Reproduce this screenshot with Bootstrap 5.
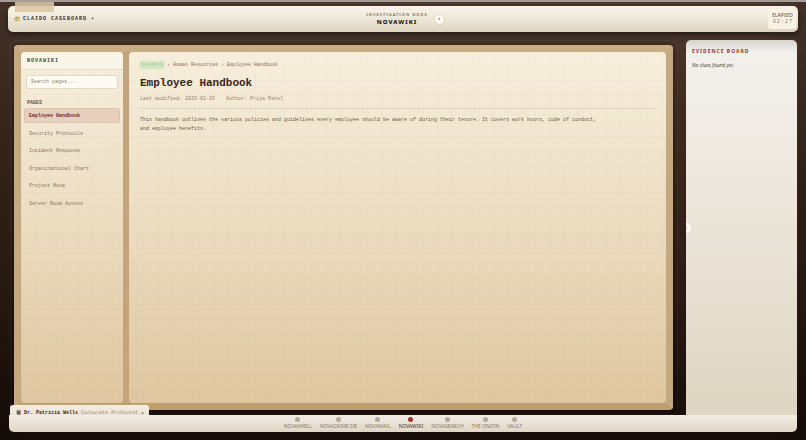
<!DOCTYPE html>
<html lang="en">
<head>
<meta charset="utf-8">
<meta name="viewport" content="width=device-width, initial-scale=1">
<title>Claido Caseboard – NovaWiki</title>
<link href="https://cdn.jsdelivr.net/npm/bootstrap@5.3.0/dist/css/bootstrap.min.css" rel="stylesheet">
<style>
:root{--mono:"Liberation Mono","Courier New",monospace;--sans:"Noto Sans","Open Sans",sans-serif}
body{font:5px/8px var(--mono);color:#3b2820;background:linear-gradient(90deg,#0002,#0000 4%,#0000 96%,#0002),linear-gradient(#4f3a30,#3e2b20 25%,#2b1c13 65%,#150c08);border-top:2px solid #a49c95;min-height:100vh;padding:4px 8px 8px}
button,input,a{font:inherit;color:inherit;text-decoration:none}
button{border:0;background:none;padding:0}
.topbar{height:26px;border-radius:5px;background:linear-gradient(#f7f1e8,#f2ecdf 35%,#ddd3be);box-shadow:0 3px 7px #0008;padding:0 2px 0 6px}
.topbar>*{flex:1 1 0}
.tape{left:7px;top:-4px;width:39px;height:10px;background:#dbc7a4dd}
.brand{font-weight:700;letter-spacing:1px;gap:3px}
.brand svg{width:6px;height:6px}
.kicker{font:600 4px/6px var(--sans);letter-spacing:1px;color:#806a5c}
.node-name{font:800 6px/9px var(--sans);letter-spacing:1px;color:#241710;margin:0}
.help{width:9px;height:9px;border-radius:50%;background:#fffaf0;font-size:4px;font-weight:700;box-shadow:0 0 2px #a988}
.title-block{gap:7px}
.clock{background:#f8f2e4;border-radius:3px;padding:3px 3px 3px 4px;line-height:8px;color:#8d7b5d;letter-spacing:1px;text-align:right}
.clock div{font:500 5px/6px var(--sans);letter-spacing:normal;color:#776153}
.frame{margin-top:8px;margin-left:2px;border:1px solid #ffffff0b;border-radius:7px;padding:4px 4px 4px 3px}
.board{border:7px solid;border-color:#c9ae84 #c4a87e #bd9f72;border-radius:4px;background:#c4a47a;gap:6px;box-shadow:0 0 5px #0007}
.paper{border-radius:4px;background:repeating-linear-gradient(90deg,#a0783c09 0 1px,transparent 1px 14px),repeating-linear-gradient(#a0783c09 0 1px,transparent 1px 14px),linear-gradient(#f7eedd,#eee0c6 40%,#dfc7a0)}
.wiki-side{width:102px}
.side-title{font:700 5px/8px var(--mono);letter-spacing:1px;color:#304c27;background:#faf5e7;padding:5px 6px 4px;margin:0;border-bottom:1px solid #e6dac4;border-radius:4px 4px 0 0}
.search{margin:5px 5px 0;width:calc(100% - 10px);height:14px;border:1px solid #e4d9c5;border-radius:2px;background:#fffbf3;padding:0 4px;color:#665246}
.search::placeholder{color:#8d7c6b;opacity:1}
.side-label{font:700 5px/6px var(--mono);color:#67503f;margin:11px 6px 2px}
.page-list{display:grid;grid-template-rows:repeat(6,1fr);height:105px;margin:0 3px}
.page-list a{height:15px;padding:3px 4px;line-height:8px;border:1px solid transparent;border-radius:3px;color:#8b735d}
.page-list a.active{background:#e7d1be;border-color:#dec1ae;color:#75272b;font-weight:700}
.article{padding:9px 11px}
.crumbs{color:#89715c;gap:3px}
.crumbs a:first-child{color:#a4cda0;background:#d7e8c5;box-shadow:0 0 2px #d7e8c5}
.article h1{font:700 11px/16px var(--mono);color:#3a2417;margin:6px 0 4px}
.meta{color:#99836c;gap:11px;padding-bottom:5px;border-bottom:1px solid #e1d4bd}
.copy{line-height:9px;color:#705b49;margin:7px 0;max-width:153ch}
.evidence{width:111px;margin:8px 1px 0 0;padding:7px 6px;border-radius:5px 5px 0 0;background:linear-gradient(#d5d2cf,#f3f0ec 12px,#eee8df 35%,#ded6c2);font-family:var(--sans)}
.evidence h2{font:700 5px/9px var(--sans);letter-spacing:1px;color:#93343b;margin:0 0 5px}
.evidence em{color:#54463e}
.toggle{left:-5px;top:50%;margin-top:-5px;width:10px;height:10px;border-radius:50%;background:#fffcf3;line-height:8px;clip-path:inset(0 0 0 5px)}
.witness{left:1px;bottom:17px;height:10px;border-radius:3px 3px 0 0;background:linear-gradient(#f4eee1,#ece3d3);padding:4px 5px 0 6px;gap:3px;line-height:8px;overflow:hidden}
.witness svg{width:5px;height:5px;margin-top:1px}
.role{color:#9d8c7d}
.caret-up{color:#873538}
.dock-wrap{margin:0 1px}
.dock{height:17px;border-radius:0 0 5px 5px;background:linear-gradient(#f3ede7,#dfd6c5);padding-top:2px;gap:8px}
.dock a{font:400 5px/8px var(--sans);color:#887769;text-align:center}
.dock a::before{content:"";display:block;width:5px;height:5px;border-radius:50%;background:#b5a89b;margin:0 auto}
.dock a.active{color:#463228}
.dock a.active::before{background:#9f3436}
</style>
<script src="https://cdn.jsdelivr.net/npm/bootstrap@5.3.0/dist/js/bootstrap.bundle.min.js"></script>
</head>
<body class="d-flex flex-column">
<header class="topbar d-flex align-items-center position-relative">
  <span class="tape position-absolute"></span>
  <button class="brand d-flex align-items-center text-start"><svg viewBox="0 0 12 12"><path fill="#bda25c" d="M1 4l3-3 7 1v8H1z"/><path fill="#e4cb77" d="M3 5l8-2-2 8H1z"/><path stroke="#58724c" d="M5 5l3-3M4 8h4"/></svg>CLAIDO CASEBOARD ▾</button>
  <div class="title-block d-flex align-items-center justify-content-center">
    <div class="text-center"><div class="kicker">INVESTIGATION NODE</div><p class="node-name">NOVAWIKI</p></div>
    <button class="help" aria-label="Help">?</button>
  </div>
  <div class="d-flex justify-content-end"><div class="clock"><div>ELAPSED</div>02:27</div></div>
</header>
<div class="d-flex flex-grow-1 gap-2">
  <main class="frame d-flex flex-grow-1">
    <div class="board d-flex flex-grow-1">
      <nav class="paper wiki-side flex-shrink-0" aria-label="Pages">
        <h2 class="side-title">NOVAWIKI</h2>
        <input class="search" type="search" placeholder="Search pages..." aria-label="Search pages">
        <div class="side-label">PAGES</div>
        <div class="page-list">
          <a class="active" href="#">Employee Handbook</a>
          <a href="#">Security Protocols</a>
          <a href="#">Incident Response</a>
          <a href="#">Organizational Chart</a>
          <a href="#">Project Nova</a>
          <a href="#">Server Room Access</a>
        </div>
      </nav>
      <article class="paper article flex-grow-1">
        <div class="crumbs d-flex"><a href="#">NovaWiki</a><span>› Human Resources</span><span>› Employee Handbook</span></div>
        <h1>Employee Handbook</h1>
        <div class="meta d-flex"><span>Last modified: 2025-02-25</span><span>Author: Priya Patel</span></div>
        <p class="copy">This handbook outlines the various policies and guidelines every employee should be aware of during their tenure. It covers work hours, code of conduct, and employee benefits.</p>
      </article>
    </div>
  </main>
  <aside class="evidence position-relative flex-shrink-0">
    <h2>EVIDENCE BOARD</h2>
    <em>No clues found yet.</em>
    <button class="toggle position-absolute" aria-label="Collapse evidence board">›</button>
  </aside>
</div>
<footer class="dock-wrap position-relative">
  <button class="witness position-absolute d-flex"><svg viewBox="0 0 10 10"><path fill="#3b4534" d="M1 1h8v8H2z"/><path fill="#a4584c" d="M5 4h3v4H5z"/><path stroke="#a9c495" d="M2 3h5M3 5h2"/></svg><b>Dr. Patricia Wells</b><span class="role">Corporate Archivist</span><span class="caret-up">▴</span></button>
  <nav class="dock d-flex justify-content-center" aria-label="Nodes">
    <a href="#">NOVASHELL</a><a href="#">NOVACRIME DB</a><a href="#">NOVAMAIL</a><a class="active" href="#">NOVAWIKI</a><a href="#">NOVASEARCH</a><a href="#">THE ONION</a><a href="#">VAULT</a>
  </nav>
</footer>
</body>
</html>
